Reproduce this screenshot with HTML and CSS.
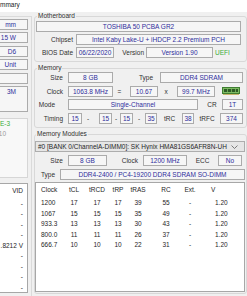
FILE: index.html
```html
<!DOCTYPE html>
<html lang="en">
<head>
  <meta charset="UTF-8">
  <title>System Summary</title>
  <link rel="stylesheet" href="styles.css">
</head>
<body>
  <div class="titlebar">mmary</div>

  <div class="main">
    <div class="side">
      <div class="side-group">
        <div class="sfield">mm</div>
        <div class="sfield">15 W</div>
        <div class="sfield">D6</div>
        <div class="sfield">Unit</div>
        <div class="sfield"></div>
        <div class="sfield tall">3M</div>
        <div class="features">
          <div class="feat on">E-3</div>
          <div class="feat off">10</div>
        </div>
        <div class="list vid-list">
          <div class="vhead">VID</div>
          <div class="vrow">-</div>
          <div class="vrow">-</div>
          <div class="vrow">-</div>
          <div class="vrow">-</div>
          <div class="vrow">.8212 V</div>
          <div class="vrow">-</div>
          <div class="vrow">-</div>
          <div class="vrow">-</div>
          <div class="vrow">-</div>
        </div>
      </div>
    </div>

    <div class="content">
      <fieldset class="group mb">
        <legend>Motherboard</legend>
        <div class="row">
          <div class="field grow">TOSHIBA 50 PCBA GR2</div>
        </div>
        <div class="row">
          <span class="lbl lbl-mb">Chipset</span>
          <div class="field grow">Intel Kaby Lake-U + iHDCP 2.2 Premium PCH</div>
        </div>
        <div class="row">
          <span class="lbl lbl-mb">BIOS Date</span>
          <div class="field w38">06/22/2020</div>
          <span class="lbl lbl-ver">Version</span>
          <div class="field w67">Version 1.90</div>
          <span class="uefi">UEFI</span>
        </div>
      </fieldset>

      <fieldset class="group mem">
        <legend>Memory</legend>
        <div class="row">
          <span class="lbl lbl-mem">Size</span>
          <div class="field w45">8 GB</div>
          <span class="lbl lbl-type">Type</span>
          <div class="field grow">DDR4 SDRAM</div>
        </div>
        <div class="row">
          <span class="lbl lbl-mem">Clock</span>
          <div class="field w45">1063.8 MHz</div>
          <span class="sep sep-eq">=</span>
          <div class="field w28">10.67</div>
          <span class="sep sep-x">x</span>
          <div class="field w38">99.7 MHz</div>
          <svg class="chip" width="18" height="8" viewBox="0 0 18 8">
            <rect x="0.5" y="0.5" width="17" height="6" fill="#7dbb62" stroke="#3f7d31"/>
            <rect x="2" y="2" width="14" height="3" fill="#2c5a25"/>
            <rect x="5" y="2" width="1" height="3" fill="#6aa553"/>
            <rect x="9" y="2" width="1" height="3" fill="#6aa553"/>
            <rect x="13" y="2" width="1" height="3" fill="#6aa553"/>
            <rect x="1" y="7" width="16" height="1" fill="#c8b46a"/>
          </svg>
        </div>
        <div class="row">
          <span class="lbl lbl-mem lbl-mode">Mode</span>
          <div class="field w130">Single-Channel</div>
          <span class="sep sep-cr">CR</span>
          <div class="field grow">1T</div>
        </div>
        <div class="row">
          <span class="lbl lbl-mem">Timing</span>
          <div class="field w14">15</div>
          <span class="sep sep-a">-</span>
          <div class="field w13">15</div>
          <span class="sep sep-b">-</span>
          <div class="field w13">15</div>
          <span class="sep sep-c">-</span>
          <div class="field w12">35</div>
          <span class="sep sep-trc">tRC</span>
          <div class="field w12">38</div>
          <span class="sep sep-trfc">tRFC</span>
          <div class="field grow">374</div>
        </div>
      </fieldset>

      <fieldset class="group mods">
        <legend>Memory Modules</legend>
        <div class="dropdown">
          <span>#0 [BANK 0/ChannelA-DIMM0]: SK Hynix HMA81GS6AFR8N-UH</span>
          <svg class="chev" width="7" height="4" viewBox="0 0 7 4">
            <polyline points="0.5,0.5 3.5,3.5 6.5,0.5" fill="none" stroke="#606060" stroke-width="0.8"/>
          </svg>
        </div>
        <div class="row">
          <span class="lbl lbl-mod">Size</span>
          <div class="field w39">8 GB</div>
          <span class="lbl lbl-clk">Clock</span>
          <div class="field w44">1200 MHz</div>
          <span class="sep sep-ecc">ECC</span>
          <div class="field w24">No</div>
        </div>
        <div class="row">
          <span class="lbl lbl-mtype">Type</span>
          <div class="field grow">DDR4-2400 / PC4-19200 DDR4 SDRAM SO-DIMM</div>
        </div>

        <div class="list timings">
          <div class="tr th">
            <span class="c-clk">Clock</span><span>tCL</span><span>tRCD</span><span>tRP</span><span>tRAS</span><span>RC</span><span>Ext.</span><span class="c-v">V</span>
          </div>
          <div class="tr">
            <span class="c-clk">1200</span><span>17</span><span>17</span><span>17</span><span>39</span><span>55</span><span>-</span><span class="c-v">1.20</span>
          </div>
          <div class="tr">
            <span class="c-clk">1067</span><span>15</span><span>15</span><span>15</span><span>35</span><span>49</span><span>-</span><span class="c-v">1.20</span>
          </div>
          <div class="tr">
            <span class="c-clk">933.3</span><span>13</span><span>13</span><span>13</span><span>30</span><span>43</span><span>-</span><span class="c-v">1.20</span>
          </div>
          <div class="tr">
            <span class="c-clk">800.0</span><span>11</span><span>11</span><span>11</span><span>26</span><span>37</span><span>-</span><span class="c-v">1.20</span>
          </div>
          <div class="tr">
            <span class="c-clk">666.7</span><span>10</span><span>10</span><span>10</span><span>22</span><span>31</span><span>-</span><span class="c-v">1.20</span>
          </div>
        </div>
      </fieldset>
    </div>
  </div>
</body>
</html>
```

FILE: styles.css
```css
html, body {
  margin: 0;
  height: 296px;
  overflow: hidden;
}
body {
  font-family: "Liberation Sans", Arial, sans-serif;
  font-size: 6.5px;
  background-color: #f0f0f0;
  color: #262626;
}
.titlebar {
  height: 12px;
  line-height: 9px;
  background-color: #fff;
  color: #1a1a1a;
}
.main {
  display: flex;
  align-items: flex-start;
}

/* left column, cut off by the window edge */
.side {
  width: 52px;
  margin-left: -20px;
  flex: none;
}
.side-group {
  box-sizing: border-box;
  margin-top: 4px;
  height: 280px;
  border: 1px solid #dadada;
  border-left: none;
  border-bottom: none;
  padding: 2px 3px 0 0;
  display: flex;
  flex-direction: column;
  gap: 2.4px;
}
.sfield {
  box-sizing: border-box;
  flex: none;
  height: 11px;
  line-height: 9px;
  border: 1px solid #ababab;
  background-color: #f6f6f6;
  color: #2e2e9c;
  text-align: right;
  padding-right: 11px;
}
.sfield.tall {
  height: 26px;
}
.features {
  box-sizing: border-box;
  flex: none;
  height: 60px;
  margin-top: 3.6px;
  border: 1px solid #d6d6d6;
  background-color: #f8f8f8;
}
.feat {
  line-height: 10px;
  text-align: right;
  padding-right: 17px;
}
.feat.on { color: #3aae3a; }
.feat.off { color: #9a9a9a; padding-right: 21px; }

.list {
  box-sizing: border-box;
  background-color: #fff;
  border: 1px solid #a7a7a7;
  padding-top: 2px;
}
.vid-list {
  flex: none;
  height: 110px;
  margin-top: 2.6px;
  text-align: right;
  padding-right: 4px;
}
.vhead {
  line-height: 9px;
  margin-bottom: 4px;
}
.vrow {
  line-height: 10.5px;
}

/* right part */
.content {
  flex: 1;
  margin-left: 2px;
  min-width: 0;
}
.group {
  margin: 0;
  min-width: 0;
  border: 1px solid #d8d8d8;
  border-radius: 3px;
}
.group legend {
  padding: 0 1px;
  margin-left: 1px;
  line-height: 8px;
  color: #303030;
}
.mb {
  padding: 1px 5px 3px 1px;
}
.mem {
  margin-top: 2px;
  padding: 0 3px 3px 1px;
}
.mods {
  margin-top: 2px;
  padding: 3px 1px 1px 0;
}
.mb .row + .row { margin-top: 2px; }
.mem .row + .row { margin-top: 2.7px; }
.mods .row { margin-top: 3px; }

.row {
  display: flex;
  align-items: center;
  height: 11px;
}
.field {
  box-sizing: border-box;
  height: 11px;
  line-height: 9px;
  border: 1px solid #ababab;
  background-color: #f6f6f6;
  color: #2e2e9c;
  text-align: center;
  white-space: nowrap;
  overflow: hidden;
  flex: none;
}
.field.grow { flex: 1; }
.w12 { width: 12px; }
.w13 { width: 13px; }
.w14 { width: 14px; }
.w24 { width: 24px; }
.w28 { width: 28px; }
.w38 { width: 38px; }
.w39 { width: 39px; }
.w44 { width: 44px; }
.w45 { width: 45px; }
.w67 { width: 67px; }
.w130 { width: 130px; }

.lbl, .sep {
  box-sizing: border-box;
  flex: none;
  white-space: nowrap;
  color: #303030;
}
.lbl { text-align: right; }
.sep { text-align: center; }
.lbl-mb { width: 40px; padding-right: 3px; }
.lbl-ver { width: 32px; padding-right: 2px; }
.uefi { margin-left: 2px; color: #3aae3a; }
.lbl-mem { width: 32px; padding-right: 5px; }
.lbl-mode { padding-right: 13px; }
.lbl-type { width: 47px; padding-right: 7px; }
.sep-eq { width: 17px; padding-right: 4px; }
.sep-x { width: 19px; padding-right: 3px; }
.sep-cr { width: 24px; padding-left: 4px; }
.sep-a { width: 17px; padding-right: 5px; }
.sep-b { width: 8px; }
.sep-c { width: 12px; }
.sep-trc { width: 25px; }
.sep-trfc { width: 26px; }
.chip { margin-left: 7px; flex: none; }

.dropdown {
  box-sizing: border-box;
  height: 11px;
  line-height: 9px;
  border: 1px solid #adadad;
  background-color: #e6e6e6;
  color: #262626;
  padding: 0 6px 0 2px;
  display: flex;
  align-items: center;
  justify-content: space-between;
  white-space: nowrap;
}
.chev { flex: none; }
.lbl-mod { width: 33px; padding-right: 5px; }
.lbl-clk { width: 36px; padding-right: 5px; }
.sep-ecc { width: 31px; }
.lbl-mtype { width: 25px; padding-right: 5px; }

.timings {
  height: 110px;
  margin-top: 2px;
}
.tr {
  display: grid;
  grid-template-columns: 26px 24px 22px 20px 20px 36px 12px 1fr;
  line-height: 10.5px;
  text-align: center;
  color: #262626;
}
.tr.th {
  line-height: 9px;
  margin-bottom: 4px;
}
.tr .c-clk { text-align: left; padding-left: 5px; }
.tr .c-v { text-align: left; padding-left: 19px; }
.tr.th .c-v { padding-left: 15px; }
```
